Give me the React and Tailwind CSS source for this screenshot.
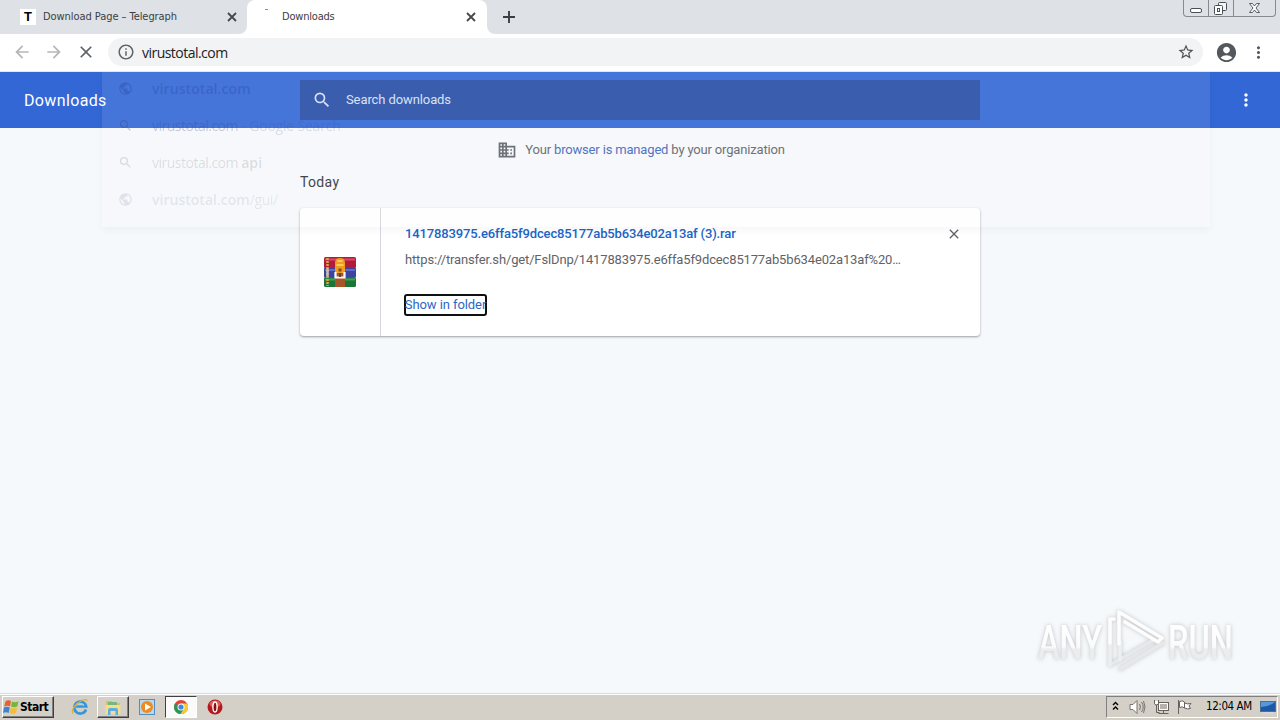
import React from "react";
import {
  MdSearch, MdDomain, MdPublic, MdAccountCircle, MdStarBorder, MdInfoOutline,
  MdMoreVert, MdClose, MdArrowBack, MdArrowForward, MdAdd,
} from "react-icons/md";

const UI = "font-['DejaVu_Sans_Condensed','DejaVu_Sans',sans-serif] [font-stretch:condensed]";

function Flare({ className }) {
  return (
    <svg className={className} width="8" height="8" viewBox="0 0 8 8">
      <path d="M8 0v8H0a8 8 0 0 0 8-8z" fill="#fff" />
    </svg>
  );
}

function TabClose() {
  return (
    <svg className="ml-auto" width="14" height="14" viewBox="0 0 14 14" fill="none" stroke="#45484c" strokeWidth="1.800">
      <path d="M3 3l8 8M11 3l-8 8" />
    </svg>
  );
}

function TabStrip() {
  return (
    <div className="flex h-[34px] bg-[#dee1e6]">
      <div className={`flex w-[247px] items-center pl-5 pr-[8px] text-[11px] text-[#3c4043] ${UI}`}>
        <span className="flex size-4 items-center justify-center bg-white font-['Liberation_Sans',sans-serif] text-[13px] font-bold text-black">T</span>
        <span className="ml-[7px] whitespace-nowrap tracking-[-0.06px]">Download Page – Telegraph</span>
        <TabClose />
      </div>
      <div className={`relative flex w-[240px] items-center rounded-t-lg bg-white pl-[35px] pr-[9px] text-[11px] text-[#3c4043] ${UI}`}>
        <Flare className="absolute bottom-0 -left-2" />
        <Flare className="absolute bottom-0 -right-2 -scale-x-100" />
        <span className="absolute left-[18px] top-[9px] h-px w-[3px] bg-[#8a8d91]" />
        <span className="tracking-[-0.2px]">Downloads</span>
        <TabClose />
      </div>
      <div className="flex w-11 items-center justify-center">
        <svg width="14" height="14" viewBox="0 0 14 14" stroke="#3b3e43" strokeWidth="1.900"><path d="M7 1v12M1 7h12" /></svg>
      </div>
      <div className="ml-auto mr-[4px] flex h-[17px] w-[93px] rounded-b-[4px] border border-t-0 border-[#868a92] text-[#4a4e55]">
        <svg width="91" height="16" viewBox="0 0 91 16" fill="none" stroke="currentColor">
          <path d="M24.500 0v16M49.500 0v16" stroke="#868a92" />
          <rect x="6.500" y="8.500" width="11" height="4" rx="1.500" fill="#fff" />
          <rect x="34.500" y="2.500" width="8" height="8" rx="1" fill="#f4f5f7" />
          <rect x="30.500" y="5.500" width="8" height="9" rx="1" fill="#fff" />
          <rect x="33.500" y="8.500" width="2" height="3" />
          <path d="M65.500 3.500h3l2 2.500 2-2.500h3l-3.500 4.500 3.500 4.500h-3l-2-2.500-2 2.500h-3l3.500-4.500z" fill="#fff" strokeWidth=".9" />
        </svg>
      </div>
    </div>
  );
}

function Toolbar() {
  return (
    <div className="flex h-[38px] items-center border-b border-[#e3e8e8] bg-white pb-px pl-3">
      <MdArrowBack size={20} className="text-[#b4b6b9]" />
      <MdArrowForward size={20} className="ml-3 text-[#b4b6b9]" />
      <MdClose size={20} className="ml-3 text-[#5f6368]" />
      <div className="ml-3 flex h-7 w-[1095px] items-center rounded-full bg-[#f1f3f4] pl-[9px] pr-[8px]">
        <MdInfoOutline size={18} className="text-[#5f6368]" />
        <span className="ml-[7px] font-['Open_Sans',sans-serif] text-[14px] tracking-[-0.53px] text-[#202124]">virustotal.com</span>
        <MdStarBorder size={18} className="ml-auto text-[#4d5156]" />
      </div>
      <MdAccountCircle size={23} className="ml-[12px] text-[#54575b]" />
      <MdMoreVert size={19} className="ml-[11px] text-[#54575b]" />
    </div>
  );
}

function Suggestion({ icon: Icon, children, className }) {
  return (
    <div className={`flex h-[37px] items-center pl-[16px] font-['Open_Sans',sans-serif] text-[14px] whitespace-nowrap ${className}`}>
      <Icon size={15} />
      <span className="ml-[19px]">{children}</span>
    </div>
  );
}

function Suggestions() {
  return (
    <div className="pointer-events-none absolute left-[102px] top-0 h-[155px] w-[1108px] overflow-visible bg-[#f6f8f8]/[0.1] shadow-[0_4px_8px_rgba(0,0,0,0.035)]">
      <div className="-mt-[2px]">
        <Suggestion icon={MdPublic} className="text-[#1c3f9c]/30"><b className="font-semibold tracking-[0.08px]">virustotal.com</b></Suggestion>
        <Suggestion icon={MdSearch} className="text-[#233a80]/25"><span className="tracking-[-0.5px]">virustotal.com</span><span className="tracking-[-0.2px] opacity-60"> - Google Search</span></Suggestion>
        <Suggestion icon={MdSearch} className="text-black/[0.12]"><span className="tracking-[-0.5px]">virustotal.com </span><b className="font-semibold tracking-[0.1px]">api</b></Suggestion>
        <Suggestion icon={MdPublic} className="text-[#303060]/[0.11]"><b className="font-semibold tracking-[0.02px]">virustotal.com</b><span className="tracking-[-0.4px]">/gui/</span></Suggestion>
      </div>
    </div>
  );
}

function ArchiveIcon() {
  return (
    <svg width="32" height="32" viewBox="0 0 32 32">
      <rect x="0" y="1" width="32" height="11" rx="1.500" fill="#b01c3a" />
      <path d="M1 3.500h30" stroke="#dc4a62" strokeWidth="2" />
      <rect x="0" y="11.500" width="32" height="10" rx="1" fill="#3c449f" />
      <path d="M1 14h30" stroke="#5f6cc6" strokeWidth="2" />
      <rect x="0" y="21" width="32" height="10" rx="1.500" fill="#1d7437" />
      <path d="M1 23.500h30" stroke="#3fa057" strokeWidth="2" />
      <path d="M3.500 2v28" stroke="#dba545" strokeWidth="2.500" strokeDasharray="2 1" />
      <path d="M3.500 12.500v8" stroke="#c2c0b8" strokeWidth="2.500" />
      <rect x="11" y="17" width="10" height="14" fill="#a8552a" />
      <path d="M11 17V7q0-5 5-5t5 5v10z" fill="#ef9c25" />
      <path d="M13.500 5h5M12.500 9h7" stroke="#ffd95f" strokeWidth="1.600" />
      <path d="M14.500 12.500h3v3h-3z" fill="#93480f" />
      <path d="M11.500 16v5.500h9V16" fill="none" stroke="#fff" strokeWidth="2.200" />
      <path d="M16 17v4" stroke="#5c4638" strokeWidth="2" />
    </svg>
  );
}

function Watermark() {
  return (
    <svg width="240" height="74" viewBox="0 0 240 74" className="overflow-visible [filter:drop-shadow(0_0_2px_rgba(70,70,70,0.3))]" fontFamily="Roboto, sans-serif" fontSize="49" fontWeight="500">
      <defs>
        <linearGradient id="wm" x1="0" y1="0" x2="0" y2="1">
          <stop offset="0.2" stopColor="#fff" />
          <stop offset="0.58" stopColor="#fafbfc" />
          <stop offset="0.62" stopColor="#ebedee" />
          <stop offset="1" stopColor="#e8eaeb" />
        </linearGradient>
      </defs>
      <text x="8" y="55" textLength="64" lengthAdjust="spacingAndGlyphs" fill="url(#wm)">ANY</text>
      <text x="138" y="55" textLength="65" lengthAdjust="spacingAndGlyphs" fill="url(#wm)">RUN</text>
      <g fill="none" strokeWidth="3.600" strokeLinejoin="round" strokeLinecap="round">
        <path d="M80 61l42-24M90 65l43-26" stroke="#e6e8e9" />
        <path d="M80 61V38M90 56V38" stroke="#eceeef" />
        <path d="M84 15h-4v24M89 40V8l43 26-4 4-33-20" stroke="#fdfdfd" />
      </g>
    </svg>
  );
}

function DownloadsPage() {
  return (
    <div className="relative flex h-[621px] flex-col bg-[#f6f9fc] font-['Roboto',sans-serif]">
      <header className="flex h-14 items-center bg-[#3367d6] px-6 text-white">
        <h1 className="w-[276px] pt-[2px] text-[16px] tracking-[0.36px]">Downloads</h1>
        <div className="flex h-10 w-[680px] items-center bg-[#264ca5] pl-[12px] text-[#d5e0f8]">
          <MdSearch size={20} />
          <span className="ml-[14px] text-[13px] tracking-[-0.1px]">Search downloads</span>
        </div>
        <MdMoreVert size={20} className="ml-auto" />
      </header>
      <main className="mx-auto w-[680px]">
        <div className="flex h-[44px] items-center justify-center gap-[8px] pl-[2px] text-[13px] text-[#5f6368]">
          <MdDomain size={20} />
          <span className="tracking-[-0.17px]">Your <span className="text-[#3f66ba]">browser is managed</span> by your organization</span>
        </div>
        <h2 className="h-9 text-[14px] leading-[20px] tracking-[0.35px] text-[#303236]">Today</h2>
        <section className="flex h-32 rounded bg-white shadow-[0_1px_2px_rgba(60,64,67,0.35),0_1px_3px_rgba(60,64,67,0.18)]">
          <div className="flex w-[81px] items-center justify-center border-r border-[#d5d8dc]"><ArchiveIcon /></div>
          <div className="flex flex-1 flex-col items-start pl-6 text-[13px]">
            <div className="mt-[17px] flex h-[18px] w-full items-center">
              <span className="font-medium tracking-[-0.14px] text-[#2065c6]">1417883975.e6ffa5f9dcec85177ab5b634e02a13af (3).rar</span>
              <MdClose size={16} className="ml-auto mr-[18px] text-[#5f6368]" />
            </div>
            <div className="mt-2 h-[18px] whitespace-nowrap leading-[18px] tracking-[-0.145px] text-[#5f6368]">https://transfer.sh/get/FslDnp/1417883975.e6ffa5f9dcec85177ab5b634e02a13af%20…</div>
            <button className="-ml-[1px] mt-[25px] h-[22px] w-[83px] rounded-[3px] border-2 border-[#101010] text-[13px] leading-[18px] tracking-[-0.08px] whitespace-nowrap text-[#2f66c6]"><span className="-mx-1">Show in folder</span></button>
          </div>
        </section>
      </main>
      <Suggestions />
      <div className="mt-auto mb-[15px] mr-[10px] h-[74px] self-end"><Watermark /></div>
    </div>
  );
}

function WindowsFlag() {
  return (
    <svg width="17" height="16" viewBox="0 0 17 16">
      <path d="M2.500 2.500Q5 .5 8 2L7 7.500Q4.500 6 1.200 7.500z" fill="#e9622e" />
      <path d="M9 2.400Q12 4 15.500 2.200L14.300 7.500Q11 9 8 7.500z" fill="#79b53a" />
      <path d="M1 8.500Q4 7 6.800 8.500L5.700 14Q3 12.500 0 14z" fill="#3f83cf" />
      <path d="M7.800 8.700Q11 10 14 8.700L13 14Q9.500 15.500 6.700 14z" fill="#f5bd34" />
    </svg>
  );
}

const raised = "border border-t-white border-l-white border-r-[#404040] border-b-[#404040] shadow-[inset_-1px_-1px_0_#808080]";

function Taskbar() {
  return (
    <div className="flex h-[27px] items-start border-t border-[#dcd9d1] bg-[#d4d0c8] pt-[2px] pl-[2px] pr-[2px] shadow-[inset_0_1px_0_#fff]">
      <div className={`flex h-[22px] w-[52px] items-center text-[12px] font-bold text-black ${UI} ${raised}`}>
        <WindowsFlag /><span className="tracking-[-0.5px]">Start</span>
      </div>
      <div className="ml-[9px] flex h-[22px] w-[34px] items-center justify-center">
        <svg width="18" height="18" viewBox="0 0 18 18" fill="none">
          <path d="M15 11.500A6 6 0 1 1 15.200 8.500H5" stroke="#3796d9" strokeWidth="2.600" />
          <path d="M5.500 8.200Q6 5.500 9 5.500t3.500 2.700" stroke="#8bd0f4" />
          <path d="M2 15.500C-.5 12 5 5 11 2.500c3-1.400 5-1 5.200.7" stroke="#d8b13c" strokeWidth="1.300" />
        </svg>
      </div>
      <div className={`flex h-[22px] w-8 items-center justify-center ${raised}`}>
        <svg width="18" height="18" viewBox="0 0 18 18">
          <path d="M2 3h6l1 2h7v11H2z" fill="#dfbd5a" />
          <path d="M4 4h9v4H4z" fill="#74b978" />
          <path d="M1.500 7h15v9h-15z" fill="#f4dd8f" />
          <path d="M4 17v-5q0-2 2-2h6q2 0 2 2v5h-2.500v-4h-5v4z" fill="#5baee0" />
        </svg>
      </div>
      <div className="flex h-[22px] w-9 items-center justify-center">
        <svg width="16" height="16" viewBox="0 0 16 16">
          <rect x=".5" y=".5" width="15" height="15" fill="#b9d8ef" stroke="#4f8fc4" />
          <circle cx="8" cy="8" r="6" fill="#ef8a1d" />
          <path d="M6 4.500l6 3.500-6 3.500z" fill="#fff" />
        </svg>
      </div>
      <div className="flex h-[22px] w-8 items-center justify-center border border-t-[#404040] border-l-[#404040] border-r-white border-b-white bg-[#fbfafa]">
        <svg width="14" height="14" viewBox="0 0 14 14">
          <circle cx="7" cy="7" r="7" fill="#e34334" />
          <path d="M7 7L.95 3.500A7 7 0 0 0 6.500 14L10 8.750z" fill="#269a55" />
          <path d="M7 3.500h6.060A7 7 0 0 1 6.500 14L10 8.700z" fill="#f7ca3a" />
          <circle cx="7" cy="7" r="3.500" fill="#fff" /><circle cx="7" cy="7" r="2.600" fill="#4483e8" />
        </svg>
      </div>
      <div className="flex h-[22px] w-[35px] items-center justify-center">
        <svg width="16" height="16" viewBox="0 0 16 16">
          <circle cx="8" cy="8" r="7.500" fill="#b3191d" />
          <ellipse cx="8" cy="5" rx="5.500" ry="3.500" fill="#df5a59" />
          <ellipse cx="8" cy="8" rx="2.100" ry="5" fill="#8b0e13" stroke="#fff" strokeWidth="1.400" />
        </svg>
      </div>
      <div className="ml-auto flex h-[22px] w-[172px] items-center border border-t-[#808080] border-l-[#808080] border-r-white border-b-white pl-[5px]">
        <svg width="8" height="12" viewBox="0 0 8 12" fill="none" stroke="#000" strokeWidth="1.400"><path d="M1 4l2.500-2.500L6 4M1 8.500L3.500 6 6 8.500" /></svg>
        <svg className="ml-[9px]" width="17" height="16" viewBox="0 0 17 16" fill="none" stroke="#77746e">
          <path d="M1 5.500h3l4-4v13l-4-4H1z" fill="#fff" /><path d="M10.500 5q2 3 0 6M12.500 3q3.500 5 0 10M14.500 2q3 6 0 12" />
        </svg>
        <svg className="ml-[7px]" width="17" height="16" viewBox="0 0 17 16" fill="none" stroke="#66635e">
          <rect x="5.500" y="3.500" width="10" height="8" fill="#b5b2ac" /><path d="M6.500 4.500h8v6h-8z" stroke="#fff" />
          <path d="M10.500 12v2M5.500 14.500h10" /><path d="M1.500 1v3q0 2 2 2t2-2V1M3.500 6v7.500h3" /><path d="M2 2h3v3H2z" fill="#fff" stroke="none" />
        </svg>
        <svg className="ml-[6px]" width="17" height="16" viewBox="0 0 17 16" stroke="#66635e" fill="#fff">
          <path d="M2.500 1v14" /><path d="M3.500 2.500q3-1.500 5 .5v6q-2-2-5-.5zM8.500 4q3 1.500 6.500.5l-2 2.500 1.500 2.500q-3 1-6-.5z" />
        </svg>
        <span className={`ml-[13px] whitespace-nowrap text-[11.500px] tracking-[-0.42px] text-black ${UI}`}>12:04 AM</span>
        <svg className="ml-auto mr-px" width="16" height="14" viewBox="0 0 16 14">
          <rect x=".5" y="1.500" width="15" height="10" fill="#1e59a8" stroke="#4d6e96" />
          <path d="M1 2h14Q8 7 1 7z" fill="#5797da" /><path d="M3 13h10" stroke="#d6e0ec" />
        </svg>
      </div>
    </div>
  );
}

export default function App() {
  return (
    <div className="flex h-[720px] w-[1280px] flex-col overflow-hidden">
      <TabStrip />
      <Toolbar />
      <DownloadsPage />
      <Taskbar />
    </div>
  );
}
